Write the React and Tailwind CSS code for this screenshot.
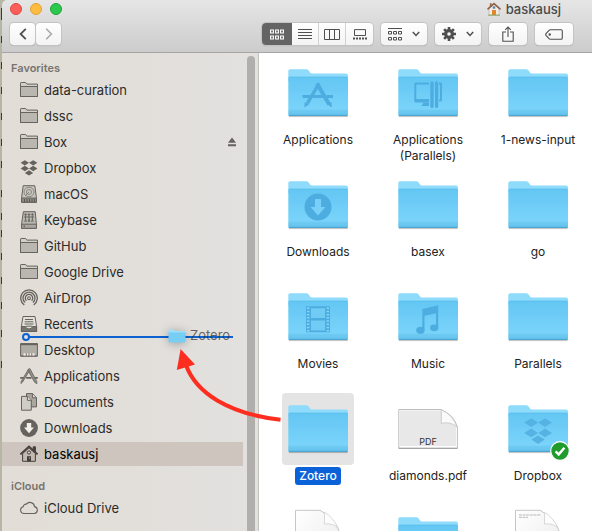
import React from "react";

/* ---------- sidebar icons ---------- */

const ink = "#66625d";

function SideIcon({ children, color = ink }) {
  return (
    <svg viewBox="0 0 18 18" className="h-[18px] w-[18px] shrink-0" fill="none" stroke={color} strokeWidth="1" aria-hidden="true">
      {children}
    </svg>
  );
}

const FolderOutline = () => (
  <SideIcon>
    <path d="M.5 15V2.2Q.5 1.5 1.2 1.5H5.3Q6 1.5 6.3 2.2L6.8 3.1H17.5V15.5H.5Z" fill="#d3cfc9" />
    <path d="M.5 5.5H17.5V15.5H.5Z" fill="#bab6b0" />
  </SideIcon>
);

const DropboxGlyph = () => (
  <SideIcon>
    <path
      d="M4.8 1.2 9 3.8 4.8 6.5.6 3.8ZM13.2 1.2 17.4 3.8 13.2 6.5 9 3.8ZM4.8 6.8 9 9.5 4.8 12.2.6 9.5ZM13.2 6.8 17.4 9.5 13.2 12.2 9 9.5ZM9 11.2 13.2 13.9 9 16.6 4.8 13.9Z"
      fill={ink}
      stroke="none"
    />
  </SideIcon>
);

const HardDrive = () => (
  <SideIcon>
    <path d="M3.2 .7H14.8L16.4 12.5V17.3H1.6V12.5Z" fill="#c8c4be" />
    <path d="M1.6 13H16.4V17.3H1.6Z" fill="#918d87" />
    <path d="M4.5 14V17M7 14V17M9.5 14V17M12 14V17M14.4 14V17" stroke="#55514c" strokeWidth=".9" />
    <ellipse cx="9" cy="7" rx="5" ry="4.8" stroke="#8a8680" />
    <ellipse cx="9" cy="7" rx="2.6" ry="2.4" stroke="#8a8680" />
    <path d="M9 7 5 11" stroke="#8a8680" />
  </SideIcon>
);

const NetworkDrive = () => (
  <SideIcon>
    <path d="M3.4 .7H15.2L16.4 12.8V17.3H1.6V12.8Z" fill="#bbb7b1" />
    <path d="M1.6 13.2H16.4V17.3H1.6Z" fill="#aaa6a0" />
    <path d="M3.5 15.3H5" strokeWidth="1.6" />
    <g strokeWidth=".9">
      <circle cx="5.6" cy="3.6" r=".8" fill={ink} />
      <circle cx="9" cy="3.6" r=".8" fill={ink} />
      <circle cx="12.4" cy="3.6" r=".8" fill={ink} />
      <path d="M4 6H14M5.6 5V8L4.8 11M5.6 8 6.4 11M9 5V8L8.2 11M9 8 9.8 11M12.4 5V8L11.6 11M12.4 8 13.2 11" />
    </g>
  </SideIcon>
);

const AirDrop = () => (
  <SideIcon>
    <g strokeWidth="1.3">
      <path d="M4.3 16A8.3 8.3 0 1 1 13.7 16" />
      <path d="M5 13.6A6 6 0 1 1 13 13.6" />
      <path d="M6.4 11.7A3.7 3.7 0 1 1 11.6 11.7" />
    </g>
    <circle cx="9" cy="9.2" r="1.4" strokeWidth="1.1" />
    <path d="M7.6 12.5 9 11 10.4 12.5" stroke="none" />
  </SideIcon>
);

const Recents = () => (
  <SideIcon>
    <path d="M3 1.5H15L16.6 11.6V16.5H1.4V11.6Z" fill="#e3dfd9" />
    <path d="M1.4 11.5H5.5Q6 14 9 14T12.5 11.5H16.6V16.5H1.4Z" fill="#77736d" />
    <path d="M5 4.5H13M4.7 6.8H13.3M4.5 9H13.5M6 11.2H12" strokeWidth="1" />
  </SideIcon>
);

const Desktop = () => (
  <SideIcon>
    <path d="M.6 2.6H17.4V15H.6Z" fill="#b0aca6" />
    <path d="M.6 3.4H17.4" strokeWidth="1.6" />
    <path d="M3.5 12.2H14.5V15.2H3.5Z" fill="#eeebe6" stroke="none" />
    <path d="M6.3 12.2V15M9 12.2V15M11.8 12.2V15" strokeWidth=".9" />
    <path d="M.6 15.2H17.4" />
  </SideIcon>
);

const AppsGlyph = () => (
  <SideIcon>
    <path d="M8 2.4 9.9 1.6 16.8 14.4V16.8L14.6 15.2 8 3.4Z" fill="#918d87" strokeWidth=".8" />
    <path d="M9.4 4 2.6 15 .9 16.5 1.3 14.2 8 3Z" fill="#918d87" strokeWidth=".8" />
    <path d="M.2 10.8H3.6M6.2 10.8H11.5M14.6 10.8H17.8" strokeWidth="1.8" />
  </SideIcon>
);

const Documents = () => (
  <SideIcon>
    <path d="M6.5 .6H12.6L16.5 4.6V13.9H6.5Z" fill="#aaa6a0" />
    <path d="M12.4 .8V4.8H16.3" fill="#dedad4" />
    <path d="M1.5 3.4H7.6L11.3 7.1V17.2H1.5Z" fill="#d0ccc6" />
    <path d="M7.4 3.6V7.3H11.2" fill="#e6e2dc" />
  </SideIcon>
);

const Downloads = () => (
  <SideIcon>
    <circle cx="9" cy="9" r="8.9" fill={ink} stroke="none" />
    <path d="M6.8 4H11.2V8.6H14L9 14.2 4 8.6H6.8Z" fill="#f2efea" stroke="none" />
  </SideIcon>
);

const House = () => (
  <SideIcon color="#45403b">
    <path d="M13.2 5V1.8H15.4V7" fill="#45403b" />
    <path d="M2.6 8.6V16.3H15.4V8.6L9 2.8Z" fill="#c2b9b0" />
    <path d="M.4 9.4 9 1.4 17.6 9.4" strokeWidth="1.8" />
    <circle cx="9" cy="7.5" r="1.6" fill="#d8d0c8" />
    <path d="M7 11.2H11V16.4H7Z" fill="#45403b" stroke="none" />
    <path d="M9.2 13H10" stroke="#d8d0c8" />
  </SideIcon>
);

const Cloud = () => (
  <SideIcon>
    <path d="M4 14.5A3.4 3.4 0 0 1 3.2 7.8 2.7 2.7 0 0 1 6.3 5.2 4.6 4.6 0 0 1 14.5 7.6 3.5 3.5 0 0 1 14.3 14.5Z" strokeWidth="1.1" />
  </SideIcon>
);

/* ---------- large icons ---------- */

function FolderShape() {
  return (
    <>
      <path d="M6.8 59.6H65.6" stroke="#000" strokeOpacity=".25" strokeWidth="1" />
      <path d="M6.3 20V14Q6.3 12.2 8 12.2H24.3Q25.6 12.2 26.4 13.2L28.3 15.8Q28.8 16.4 29.8 16.4H64Q66 16.4 66 18.4V24H6.3Z" fill="#8fdbfb" />
      <path d="M6.3 21.5Q6.3 19.7 8 19.7H64.3Q66 19.7 66 21.5V57.5Q66 59 64.5 59H7.8Q6.3 59 6.3 57.5Z" fill="url(#folderFront)" />
      <path d="M6.8 20.2H65.5" stroke="#57b9e6" strokeOpacity=".7" strokeWidth=".8" />
      <path d="M6.5 54H65.8M6.5 56H65.8" stroke="#59b7e2" strokeOpacity=".55" strokeWidth=".8" />
      <path d="M6.8 58.4H65.5" stroke="#4aa7d3" strokeWidth="1.2" />
    </>
  );
}

const mark = "#4dade0";

const emblems = {
  apps: (
    <g stroke={mark} fill="none">
      <path d="M20.5 39.6H28M31 39.6H41M44.5 39.6H51" strokeWidth="3" />
      <path d="M35 26.5 47.2 47.5" strokeWidth="4" />
      <path d="M37 26.5 25.3 46.5" strokeWidth="3.4" />
      <path d="M45.5 47.5 49.5 45 49.8 50.5ZM22.6 45.2 27 47.6 22.4 50.6Z" fill={mark} stroke="none" />
    </g>
  ),
  parallels: (
    <g fill={mark}>
      <path d="M22.3 27Q22.3 25.6 23.7 25.6H37V27.6H24.3V42H37V45.6H23.7Q22.3 45.6 22.3 44.2Z" />
      <path d="M29.5 49 31.5 45.5H37V49Z" />
      <path d="M38.3 26Q38.3 24.2 40 24.2T41.7 26V49.5Q41.7 51 40 51T38.3 49.5ZM43 26Q43 24.2 44.6 24.2T46.2 26V49.5Q46.2 51 44.6 51T43 49.5Z" />
      <path d="M47 25.6H48.5Q50 25.6 50 27V43Q50 44.6 48.5 44.6H47V42.6H48V27.6H47Z" />
    </g>
  ),
  downloads: (
    <g>
      <circle cx="36" cy="38" r="13.5" fill={mark} />
      <path d="M33 30H39V38H43.5L36 46.5 28.5 38H33Z" fill="#78cff7" />
    </g>
  ),
  movies: (
    <g>
      <path d="M24 25.3H48V51.3H24Z" fill={mark} />
      <path d="M29 27.2H43V37H29ZM29 39.6H43V49.6H29Z" fill="#70cbf5" />
      <path d="M26.2 26.5V50.5M45.8 26.5V50.5" stroke="#86d6fa" strokeWidth="2.4" strokeDasharray="1.5 1.7" />
    </g>
  ),
  music: (
    <g fill={mark}>
      <path d="M30.3 28 46.2 24.3V47H44V32.3L32.5 34.8V49H30.3Z" />
      <ellipse cx="28.4" cy="49.3" rx="4.2" ry="3.6" />
      <ellipse cx="42.2" cy="46.8" rx="4.2" ry="3.4" />
    </g>
  ),
  dropbox: (
    <path
      d="M29.2 25.3 36.2 29.6 29.2 34 22.2 29.6ZM43 25.3 50 29.6 43 34 36.2 29.6ZM29.2 35.6 36 40 29.2 44.3 22.2 40ZM43 35.6 50 40 43 44.3 36.4 40ZM36 42.4 42.8 46.6 36 51 29.4 46.6Z"
      fill="#55b2e3"
    />
  ),
};

function FolderIcon({ emblem }) {
  return (
    <svg viewBox="0 0 72 72" className="block h-[72px] w-[72px]" aria-hidden="true">
      <FolderShape />
      {emblem ? emblems[emblem] : null}
    </svg>
  );
}

function PdfIcon() {
  return (
    <svg viewBox="0 0 72 72" className="block h-[72px] w-[72px]" aria-hidden="true">
      <path d="M6.8 16.5H49Q62 22 65.4 34V55.3H6.8Z" fill="#fff" stroke="#bdbdbd" />
      <path d="M8 17.5H48.5Q60 24 64 34V53H8Z" fill="#e8e8e8" />
      <path d="M49.3 16.8V30.5Q58 28 65 34Q61 22 49.3 16.8Z" fill="#fafafa" stroke="#c4c4c4" strokeWidth=".8" />
      <path d="M6.8 55.3H65.4" stroke="#9b9b9b" />
      <text x="36" y="51.5" textAnchor="middle" fontSize="9" fill="#333" className="font-['Inter',sans-serif]">
        PDF
      </text>
    </svg>
  );
}

function PageIcon({ lines }) {
  return (
    <svg viewBox="0 0 72 72" className="block h-[72px] w-[72px]" aria-hidden="true">
      <path d="M13.5 5.3H38Q53 13 58 28V68H13.5Z" fill="url(#page)" stroke="#c6c6c6" />
      <path d="M42.5 7.3V19Q51 18 56 23Q51 12 42.5 7.3Z" fill="#fdfdfd" stroke="#cfcfcf" strokeWidth=".8" />
      {lines ? <path d="M17 10H39M17 12.3H26" stroke="#b9b9b9" strokeWidth="1" strokeDasharray="3 .6" /> : null}
    </svg>
  );
}

/* ---------- data ---------- */

const favorites = [
  { name: "data-curation", Icon: FolderOutline },
  { name: "dssc", Icon: FolderOutline },
  { name: "Box", Icon: FolderOutline, eject: true },
  { name: "Dropbox", Icon: DropboxGlyph },
  { name: "macOS", Icon: HardDrive },
  { name: "Keybase", Icon: NetworkDrive },
  { name: "GitHub", Icon: FolderOutline },
  { name: "Google Drive", Icon: FolderOutline },
  { name: "AirDrop", Icon: AirDrop },
  { name: "Recents", Icon: Recents },
  { name: "Desktop", Icon: Desktop, dropTarget: true },
  { name: "Applications", Icon: AppsGlyph },
  { name: "Documents", Icon: Documents },
  { name: "Downloads", Icon: Downloads },
  { name: "baskausj", Icon: House, current: true },
];

const files = [
  { name: "Applications", emblem: "apps" },
  { name: "Applications (Parallels)", emblem: "parallels" },
  { name: "1-news-input" },
  { name: "Downloads", emblem: "downloads" },
  { name: "basex" },
  { name: "go" },
  { name: "Movies", emblem: "movies" },
  { name: "Music", emblem: "music" },
  { name: "Parallels" },
  { name: "Zotero", selected: true },
  { name: "diamonds.pdf", kind: "pdf" },
  { name: "Dropbox", emblem: "dropbox", synced: true },
  { label: "Document", kind: "page" },
  { label: "Folder" },
  { label: "Text document", kind: "text" },
];

/* ---------- pieces ---------- */

function SidebarItem({ name, Icon, eject, current, dropTarget }) {
  return (
    <li className={current ? "relative flex h-6 items-center bg-[#cdc5be] pl-[18px]" : "relative flex h-6 items-center pl-[18px]"}>
      <a
        href="#"
        aria-current={current ? "page" : undefined}
        className={current ? "flex flex-1 items-center gap-1.5 text-black" : "flex flex-1 items-center gap-1.5 text-[#2d2b29]"}
      >
        <Icon />
        <span className="whitespace-nowrap">{name}</span>
      </a>
      {eject ? (
        <button type="button" aria-label={"Eject " + name} className="mr-[7px]">
          <svg viewBox="0 0 8 10" className="h-2.5 w-2" fill={ink} aria-hidden="true">
            <path d="M4 .5 8 5.7H0ZM0 7.2H8V9.2H0Z" />
          </svg>
        </button>
      ) : null}
      {dropTarget ? (
        <span className="absolute -top-0.5 right-2.5 left-6 h-0.5 bg-[#0b62d0]">
          <span className="absolute -top-[3px] -left-1 h-2 w-2 rounded-full border-2 border-[#0b62d0] bg-[#e3dfd9]" />
        </span>
      ) : null}
    </li>
  );
}

function FileItem({ name, label, kind, emblem, selected, synced }) {
  let icon = <FolderIcon emblem={emblem} />;
  if (kind === "pdf") icon = <PdfIcon />;
  if (kind === "page") icon = <PageIcon />;
  if (kind === "text") icon = <PageIcon lines />;
  return (
    <button type="button" aria-label={label} className="flex h-28 flex-col items-center gap-0.5">
      <span className={selected ? "relative rounded bg-[#e4e4e4]" : "relative"}>
        {icon}
        {synced ? (
          <svg viewBox="0 0 20 20" className="absolute right-1 bottom-1 h-5 w-5" aria-hidden="true">
            <circle cx="10" cy="10" r="9.3" fill="#1f9c2b" stroke="#fff" strokeWidth="1.2" />
            <path d="M5.6 10.4 8.7 13.4 14.4 6.8" fill="none" stroke="#fff" strokeWidth="2.4" />
          </svg>
        ) : null}
      </span>
      <span
        className={
          selected
            ? "rounded-[3px] bg-[#0b62d8] px-1 py-px font-medium text-white"
            : "max-w-[90px] px-1 py-px text-[#222]"
        }
      >
        {name}
      </span>
    </button>
  );
}

const toolButton =
  "flex h-[22px] items-center justify-center rounded bg-gradient-to-b from-white to-[#f3f3f3] shadow-[0_0_0_1px_#c3c3c3,0_1px_1px_#9a9a9a] text-[#4f4f4f]";

const Chevron = () => (
  <svg viewBox="0 0 8 6" className="h-1.5 w-2" fill="none" stroke="currentColor" strokeWidth="1.5" aria-hidden="true">
    <path d="M.8 1 4 4.4 7.2 1" />
  </svg>
);

function Toolbar() {
  return (
    <header className="flex h-[53px] shrink-0 flex-col border-b border-[#a5a5a5] bg-gradient-to-b from-[#e6e6e6] to-[#cccccc]">
      <div className="flex h-[18px] items-center pl-2">
        <div className="flex gap-2">
          <button type="button" aria-label="Close" className="h-3 w-3 rounded-full border border-[#e2463f] bg-[#fc5f5a]" />
          <button type="button" aria-label="Minimize" className="h-3 w-3 rounded-full border border-[#dfa137] bg-[#fdbc40]" />
          <button type="button" aria-label="Zoom" className="h-3 w-3 rounded-full border border-[#1ca438] bg-[#2bc84c]" />
        </div>
        <h1 className="mr-[31px] ml-auto flex items-center gap-[5px] text-[13px] leading-[18px] font-medium text-[#4a4a4a]">
          <svg viewBox="0 0 14 14" className="h-3.5 w-3.5" aria-hidden="true">
            <path d="M2.8 1.2H4.6V5H2.8Z" fill="#9b6a4c" />
            <path d="M2 6.5 7 2.2 12 6.5V13H2Z" fill="#f1ede6" stroke="#a8a29a" strokeWidth=".5" />
            <path d="M.5 7.4 7 1.6 13.5 7.4" fill="none" stroke="#8f5f45" strokeWidth="1.5" />
            <path d="M5.7 4.3H8.3V6.7H5.7Z" fill="#5f87ad" />
            <path d="M5 8H9V13H5Z" fill="#e6862c" />
            <path d="M1 13.2H13" stroke="#77a04f" strokeWidth=".8" />
          </svg>
          baskausj
        </h1>
      </div>
      <div className="flex items-center justify-between pt-[5px] pr-[19px] pl-2">
        <div className="flex gap-px">
          <button type="button" aria-label="Back" className={toolButton + " w-[25px]"}>
            <svg viewBox="0 0 8 12" className="h-3 w-2" fill="none" stroke="currentColor" strokeWidth="1.8" aria-hidden="true">
              <path d="M6.8 .8 1.6 6 6.8 11.2" />
            </svg>
          </button>
          <button type="button" aria-label="Forward" className={toolButton + " w-[25px]"}>
            <svg viewBox="0 0 8 12" className="h-3 w-2" fill="none" stroke="#a9a9a9" strokeWidth="1.6" aria-hidden="true">
              <path d="M1.2 .8 6.4 6 1.2 11.2" />
            </svg>
          </button>
        </div>
        <div className="flex gap-2">
          <div className={toolButton + " overflow-hidden"}>
            <button type="button" aria-label="Icon view" aria-pressed="true" className="flex h-full w-[30px] items-center justify-center bg-[#646464] text-white">
              <svg viewBox="0 0 14 11" className="h-[11px] w-3.5" fill="none" stroke="currentColor" strokeWidth="1.1" aria-hidden="true">
                <path d="M.6 1H3.4V4H.6ZM5.6 1H8.4V4H5.6ZM10.6 1H13.4V4H10.6ZM.6 7H3.4V10H.6ZM5.6 7H8.4V10H5.6ZM10.6 7H13.4V10H10.6Z" />
              </svg>
            </button>
            <button type="button" aria-label="List view" className="flex h-full w-[27px] items-center justify-center border-r border-[#d2d2d2]">
              <svg viewBox="0 0 14 12" className="h-3 w-3.5" fill="none" stroke="currentColor" aria-hidden="true">
                <path d="M0 1.5H14M0 4.5H14M0 7.5H14M0 10.5H14" />
              </svg>
            </button>
            <button type="button" aria-label="Column view" className="flex h-full w-[27px] items-center justify-center border-r border-[#d2d2d2]">
              <svg viewBox="0 0 16 11" className="h-[11px] w-4" fill="none" stroke="currentColor" aria-hidden="true">
                <path d="M.5 .5H15.5V10.5H.5ZM5.5 .5V10.5M10.5 .5V10.5" />
              </svg>
            </button>
            <button type="button" aria-label="Gallery view" className="flex h-full w-[27px] items-center justify-center">
              <svg viewBox="0 0 14 11" className="h-[11px] w-3.5" fill="none" stroke="currentColor" aria-hidden="true">
                <path d="M1.5 .6H12.5V6.5H1.5Z" />
                <path d="M0 9.5H14" strokeWidth="1.8" strokeDasharray="2 1" />
              </svg>
            </button>
          </div>
          <button type="button" aria-label="Group by" className={toolButton + " w-[46px] gap-2.5"}>
            <svg viewBox="0 0 14 13" className="h-[13px] w-3.5" fill="none" stroke="currentColor" aria-hidden="true">
              <path d="M0 .5H14M.5 3.5H3.5V6H.5ZM5.5 3.5H8.5V6H5.5ZM10.5 3.5H13.5V6H10.5ZM.5 9.5H3.5V12H.5ZM5.5 9.5H8.5V12H5.5ZM10.5 9.5H13.5V12H10.5Z" />
            </svg>
            <Chevron />
          </button>
          <button type="button" aria-label="Actions" className={toolButton + " w-[46px] gap-2.5"}>
            <svg viewBox="0 0 14 14" className="h-3.5 w-3.5" aria-hidden="true">
              <g stroke="currentColor" strokeWidth="2.6">
                <path d="M7 0V14M0 7H14M2.1 2.1 11.9 11.9M11.9 2.1 2.1 11.9" />
              </g>
              <circle cx="7" cy="7" r="5" fill="currentColor" />
              <circle cx="7" cy="7" r="1.8" fill="#f8f8f8" />
            </svg>
            <Chevron />
          </button>
          <button type="button" aria-label="Share" className={toolButton + " w-[38px]"}>
            <svg viewBox="0 0 12 16" className="h-4 w-3" fill="none" stroke="currentColor" strokeWidth="1.1" aria-hidden="true">
              <path d="M4 6H.8V15.2H11.2V6H8M6 11V1.2M3.2 3.8 6 1 8.8 3.8" />
            </svg>
          </button>
          <button type="button" aria-label="Edit tags" className={toolButton + " w-[38px]"}>
            <svg viewBox="0 0 18 11" className="h-[11px] w-[18px]" fill="none" stroke="currentColor" strokeWidth="1.1" aria-hidden="true">
              <path d="M5.4 .7H16Q17.3 .7 17.3 2V9Q17.3 10.3 16 10.3H5.4Q4.6 10.3 4 9.7L1 6.3Q.4 5.5 1 4.7L4 1.3Q4.6 .7 5.4 .7Z" />
              <circle cx="4.7" cy="5.5" r=".7" />
            </svg>
          </button>
        </div>
      </div>
    </header>
  );
}

const backdropMarks = [8, 13, 36, 62, 87, 113, 139, 161, 190, 213, 230, 253, 277, 302, 330, 361];

export default function App() {
  return (
    <div className="relative flex h-screen overflow-hidden bg-[#b7b5a3] font-['Inter','Liberation_Sans',sans-serif]">
      <svg className="h-full w-0.5 shrink-0" aria-hidden="true">
        {backdropMarks.map((y) => (
          <rect key={y} x="1" y={y} width="1" height="7" fill="#3c3b38" />
        ))}
      </svg>
      <div className="flex min-w-0 flex-1 flex-col overflow-hidden rounded-tl-[5px]">
        <Toolbar />
        <div className="flex min-h-0 flex-1">
          <aside className="flex w-[257px] shrink-0 border-r border-[#c4c2bf] bg-gradient-to-r from-[#e2ddd6] to-[#e2e1df]">
            <nav aria-label="Sidebar" className="mr-1 flex-1 pt-[7px] text-[13px] leading-4">
              <h2 className="pl-[9px] text-[11px] font-semibold text-[#77736f]">Favorites</h2>
              <ul className="flex flex-col gap-0.5 pt-0.5">
                {favorites.map((item) => (
                  <SidebarItem key={item.name} {...item} />
                ))}
              </ul>
              <h2 className="pt-3 pl-[9px] text-[11px] font-semibold text-[#77736f]">iCloud</h2>
              <ul className="pt-0.5">
                <SidebarItem name="iCloud Drive" Icon={Cloud} />
              </ul>
            </nav>
            <div className="mt-[3px] mr-[3px] w-2 rounded-t-full bg-[#b0afac]" />
          </aside>
          <main className="grid min-w-0 flex-1 grid-cols-[repeat(3,minmax(110px,1fr))] content-start overflow-hidden bg-white pt-1 pl-1 text-xs leading-4">
            <svg className="absolute h-0 w-0" aria-hidden="true">
              <defs>
                <linearGradient id="folderFront" x1="0" y1="0" x2="0" y2="1">
                  <stop offset="0" stopColor="#63c6f3" />
                  <stop offset=".8" stopColor="#79d3fa" />
                  <stop offset="1" stopColor="#66c4ee" />
                </linearGradient>
                <linearGradient id="page" x1="0" y1="0" x2="1" y2="1">
                  <stop offset="0" stopColor="#ffffff" />
                  <stop offset="1" stopColor="#e9e9e9" />
                </linearGradient>
              </defs>
            </svg>
            {files.map((file, i) => (
              <FileItem key={i} {...file} />
            ))}
          </main>
        </div>
      </div>

      {/* Item being dragged towards the sidebar */}
      <div className="pointer-events-none absolute top-[326px] left-[168px] flex items-center gap-1 text-[13px] leading-4 text-[#2b2b2b]/70">
        <svg viewBox="0 0 18 18" className="h-[18px] w-[18px] drop-shadow-[0_1px_5px_rgba(0,0,0,0.3)]" aria-hidden="true">
          <path d="M.5 4.5Q.5 3.5 1.5 3.5H5.5L7 5H16.5Q17.5 5 17.5 6V8H.5Z" fill="#9bdffa" />
          <path d="M.5 6.5H17.5V15.5Q17.5 16.5 16.5 16.5H1.5Q.5 16.5 .5 15.5Z" fill="#77cef4" />
        </svg>
        Zotero
      </div>

      {/* Drag direction arrow */}
      <svg viewBox="0 0 110 80" className="pointer-events-none absolute top-[345px] left-[174px] h-20 w-[110px]" aria-hidden="true">
        <path d="M12 20C22 48 55 69 106.500 74.700" fill="none" stroke="#fd2e1f" strokeWidth="4" />
        <path d="M6.600 4 21 19.500 2.800 25Z" fill="#fd2e1f" />
      </svg>
    </div>
  );
}
